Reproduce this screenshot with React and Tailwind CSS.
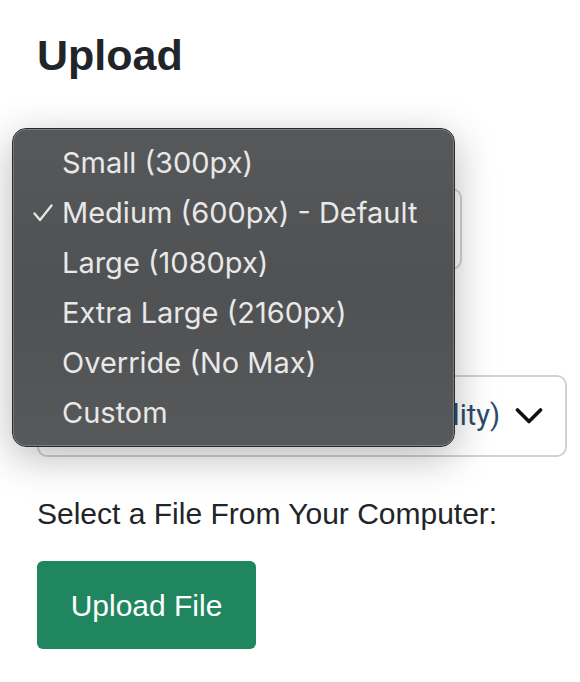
import React from "react";

const items = [
  "Small (300px)",
  "Medium (600px) - Default",
  "Large (1080px)",
  "Extra Large (2160px)",
  "Override (No Max)",
  "Custom",
];

function Check() {
  return (
    <svg width="20" height="18" viewBox="0 0 20 18" fill="none">
      <path d="M1.5 9.5 L7 16 L18.5 1.5" stroke="#e6e6e6" strokeWidth="2.3" strokeLinecap="round" strokeLinejoin="round" />
    </svg>
  );
}

function Chevron() {
  return (
    <svg width="28" height="18" viewBox="0 0 28 18" fill="none">
      <path d="M2.5 3 L14 14.5 L25.5 3" stroke="#111" strokeWidth="3.6" strokeLinecap="round" strokeLinejoin="round" />
    </svg>
  );
}

export default function App() {
  return (
    <div className="relative w-[580px] h-[682px] overflow-hidden bg-white font-['Liberation_Sans',Arial,sans-serif] text-[#212529]">
      <div className="flex flex-col items-start px-[37px]">
        <h1 className="mt-[34px] text-[43px] leading-[43px] font-bold">Upload</h1>
        <div className="mt-[111px] w-[425px] h-[82px] rounded-[10px] border-2 border-[#d2d2d2]" />
        <div className="mt-[105px] w-[530px] h-[82px] rounded-[10px] border-2 border-[#d2d2d2] flex items-center justify-end gap-[15px] pr-[22px] overflow-hidden text-[29px] text-[#2d4a6b] font-['Roboto',sans-serif]">
          <span className="whitespace-nowrap">(Best Quality)</span>
          <Chevron />
        </div>
        <div className="mt-[42px] text-[30px] leading-[30px]">Select a File From Your Computer:</div>
        <button className="mt-[32px] w-[219px] h-[88px] rounded-[6px] bg-[#208660] text-white text-[30px] flex items-center justify-center">
          Upload File
        </button>
      </div>

      <div className="absolute left-[12px] top-[128px] w-[443px] h-[319px] rounded-[14px] border border-[#2a2a2a] bg-[linear-gradient(180deg,#575859_0%,#4f5153_50%,#575859_100%)] shadow-[0_10px_40px_rgba(0,0,0,0.28)] py-[9px] font-['Inter',sans-serif]">
        <div className="absolute inset-0 rounded-[13px] ring-1 ring-inset ring-[rgba(255,255,255,0.22)] pointer-events-none" />
        {items.map((t, i) => (
          <div key={t} className="relative h-[50px] flex items-center pl-[49px] text-[29px] text-[#e8e8e8] whitespace-nowrap">
            {i === 1 && (
              <span className="absolute left-[20px] top-[16px]">
                <Check />
              </span>
            )}
            {t}
          </div>
        ))}
      </div>
    </div>
  );
}
